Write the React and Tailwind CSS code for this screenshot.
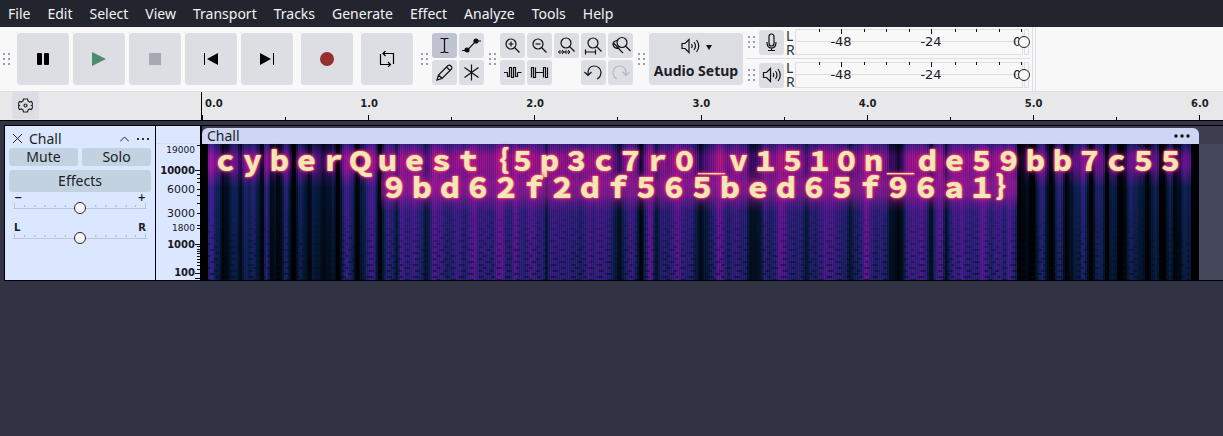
import React from "react";

const MENUS = ["File", "Edit", "Select", "View", "Transport", "Tracks", "Generate", "Effect", "Analyze", "Tools", "Help"];

function Grip() {
  return (
    <svg width="8" height="13" className="shrink-0 fill-[#9a9cb4]" aria-hidden="true">
      {[0, 5, 10].map((y) => (
        <g key={y}>
          <rect x="0" y={y} width="2" height="2" />
          <rect x="5" y={y} width="2" height="2" />
        </g>
      ))}
    </svg>
  );
}

function BigButton({ label, children }) {
  return (
    <button aria-label={label} className="flex size-[52px] shrink-0 items-center justify-center rounded-[3px] bg-[#dddee4]">
      <svg width="16" height="16" viewBox="0 0 16 16" fill="none">{children}</svg>
    </button>
  );
}

function ToolButton({ label, active, children }) {
  return (
    <button
      aria-label={label}
      className={"flex size-[25px] shrink-0 items-center justify-center rounded-[3px] " + (active ? "bg-[#c0c3d2]" : "bg-[#dddee4]")}
    >
      <svg width="21" height="21" viewBox="0 0 21 21" fill="none" stroke="#111" strokeWidth="1.2">{children}</svg>
    </button>
  );
}

function Lens({ x = 9, y = 8, r = 5, handle = 5 }) {
  return (
    <>
      <circle cx={x} cy={y} r={r} />
      <path d={`M${x + r * 0.7} ${y + r * 0.7}l${handle} ${handle}`} />
    </>
  );
}

function Speaker() {
  return (
    <>
      <path d="M2.5 7.5h3l4-4v13l-4-4h-3z" />
      <path d="M12 8q1.5 2 0 4M14.5 6q3 4 0 8M17 4q4.5 6 0 12" />
    </>
  );
}

function Meter({ label, children }) {
  const ticks = [24, 46, 69, 91, 114, 136, 160, 181, 204, 226];
  return (
    <div className="flex h-8 items-center pl-0.5">
      <Grip />
      <div className="ml-[3px] flex items-center gap-0.5">
        <ToolButton label={label}>{children}</ToolButton>
        <div className="w-2 leading-[14px] text-[#333]">
          <div>L</div>
          <div>R</div>
        </div>
        <div className="relative -ml-px h-[27px] w-[235px]">
          <svg width="235" height="27" className="block" fill="none">
            <path d="M0.5 0.5h227v25h-227zM0 12.5h227M229.5 0.5h4v25h-4z" stroke="#dddde3" />
            {ticks.map((x) => (
              <path key={x} d={`M${x + 0.5} 0v${x === 46 || x === 136 ? 5 : 3}`} stroke="#111" />
            ))}
            <g fill="#18181c" fontSize="13" fontFamily="DejaVu Sans, sans-serif">
              <text x="46" y="17" textAnchor="middle">-48</text>
              <text x="136" y="17" textAnchor="middle">-24</text>
              <text x="218" y="17">0</text>
            </g>
          </svg>
          <input
            type="range"
            aria-label={label + " volume"}
            defaultValue="100"
            className="absolute inset-x-0 top-[7px] m-0 h-3 w-full appearance-none bg-transparent [&::-webkit-slider-thumb]:size-3 [&::-webkit-slider-thumb]:appearance-none [&::-webkit-slider-thumb]:rounded-full [&::-webkit-slider-thumb]:border [&::-webkit-slider-thumb]:border-[#222] [&::-webkit-slider-thumb]:bg-[#f8f8f9]"
          />
        </div>
      </div>
    </div>
  );
}

function TrackSlider({ label, low, high }) {
  return (
    <div className="px-1 pt-px">
      <div className="flex justify-between px-px text-[10px] leading-[9px] font-bold">
        <span>{low}</span>
        <span>{high}</span>
      </div>
      <div className="relative h-5">
        <svg width="100%" height="8" viewBox="0 0 132 8" preserveAspectRatio="none" className="absolute top-0 left-0" fill="none">
          <path d="M1.500 1v6M130.500 1v6M0 6.500h132" stroke="#b9c7d8" />
          {[11, 21, 31, 41, 51, 81, 91, 101, 111, 120].map((x) => (
            <path key={x} d={`M${x + 0.5} 3v2`} stroke="#a7b2c2" />
          ))}
        </svg>
        <input
          type="range"
          aria-label={label}
          className="absolute top-0 left-0 m-0 h-3 w-full appearance-none bg-transparent [&::-webkit-slider-thumb]:size-3 [&::-webkit-slider-thumb]:appearance-none [&::-webkit-slider-thumb]:rounded-full [&::-webkit-slider-thumb]:border [&::-webkit-slider-thumb]:border-[#222] [&::-webkit-slider-thumb]:bg-[#fafafa]"
        />
      </div>
    </div>
  );
}

const FREQUENCIES = [
  ["19000", 27, 9, "normal"],
  ["10000", 48, 10, "bold"],
  ["6000", 67, 11, "normal"],
  ["3000", 91, 11, "normal"],
  ["1800", 105, 9, "normal"],
  ["1000", 122, 10, "bold"],
  ["100", 150, 10, "bold"],
];
const FREQUENCY_TICKS = [23, 48, 52, 56, 60, 67, 73, 81, 91, 103, 106, 122, 124, 127, 129, 131, 134, 137, 140, 143, 147, 151];

const DARK = [[223, 5], [239, 3], [261, 4], [270, 3], [279, 4], [293, 4], [308, 5], [325, 6], [338, 4], [356, 4], [380, 4], [396, 3], [427, 4], [546, 3], [618, 5], [641, 5], [656, 3], [701, 8], [751, 4], [759, 4], [806, 3], [850, 4], [892, 5], [899, 5], [931, 4], [946, 3], [1021, 7], [1032, 5], [1051, 5], [1067, 6], [1090, 4], [1107, 4], [1122, 8], [1147, 6], [1162, 5], [1175, 5], [1196, 8]];
const BRIGHT = [[210, 3], [267, 4], [345, 4], [372, 4], [402, 4], [433, 6], [472, 5], [498, 6], [514, 4], [533, 5], [552, 4], [597, 4], [650, 5], [680, 6], [720, 5], [782, 5], [830, 5], [866, 4], [920, 6], [942, 5], [962, 4], [984, 4], [1010, 4], [1060, 3]];

const peak = (list, x) => list.reduce((sum, [c, w]) => sum + Math.exp(-(((x - c) / w) ** 2)), 0);

const COLUMNS = Array.from({ length: 499 }, (_, i) => {
  const x = 202 + i * 2;
  if (x < 208 || x > 1190) return 0;
  const base = x > 380 && x < 1018 ? 10.4 : 7.6;
  const wave = Math.sin(x * 0.43) + Math.sin(x * 0.29 + 1) + Math.sin(x * 0.93) * 0.7;
  const level = base + wave + peak(BRIGHT, x) * 4 - peak(DARK, x) * 7.5;
  return Math.max(0, Math.min(18, Math.round(level)));
});

// top, upper band, middle, bottom for each level of energy
const STOPS = [
  [[0, 0, 0], [2, 1, 8], [0, 2, 5], [0, 0, 0]],
  [[3, 8, 28], [40, 12, 84], [2, 13, 32], [1, 8, 18]],
  [[10, 20, 64], [76, 18, 124], [6, 26, 60], [4, 22, 44]],
  [[25, 29, 96], [100, 20, 140], [17, 32, 88], [10, 28, 68]],
  [[40, 31, 120], [122, 20, 150], [36, 34, 118], [22, 34, 94]],
  [[54, 31, 134], [142, 22, 152], [52, 33, 134], [38, 34, 120]],
  [[68, 29, 144], [160, 22, 150], [70, 29, 144], [54, 32, 134]],
  [[88, 26, 150], [176, 24, 148], [92, 26, 152], [76, 29, 148]],
  [[108, 23, 156], [192, 26, 144], [116, 23, 156], [102, 24, 154]],
  [[132, 21, 156], [208, 32, 138], [144, 22, 156], [132, 22, 158]],
];
const LEVELS = Array.from({ length: 19 }, (_, i) => {
  const low = STOPS[Math.floor(i / 2)];
  const high = STOPS[Math.ceil(i / 2)];
  return low.map((c, k) => `rgb(${c.map((v, n) => Math.round((v + high[k][n]) / 2)).join(",")})`);
});

function Spectrogram() {
  return (
    <svg viewBox="0 0 998 136" preserveAspectRatio="none" className="block h-[136px] w-full" aria-hidden="true">
      <defs>
        {LEVELS.map((c, i) => (
          <linearGradient key={i} id={`level${i}`} x1="0" y1="0" x2="0" y2="1">
            <stop offset="0" stopColor={c[0]} />
            <stop offset="0.09" stopColor={c[1]} />
            <stop offset="0.17" stopColor={c[1]} />
            <stop offset="0.32" stopColor={c[2]} />
            <stop offset="1" stopColor={c[3]} />
          </linearGradient>
        ))}
        <linearGradient id="band" x1="0" y1="0" x2="0" y2="1">
          <stop offset="0" stopColor="#b3169a" stopOpacity="0" />
          <stop offset="0.35" stopColor="#b8189a" stopOpacity="0.55" />
          <stop offset="0.6" stopColor="#b8189a" stopOpacity="0.5" />
          <stop offset="1" stopColor="#8a169a" stopOpacity="0" />
        </linearGradient>
        <pattern id="ripple" width="46" height="12" patternUnits="userSpaceOnUse">
          <path d="M1 1h5M14 1h3M27 1h6M5 4h4M19 4h5M38 4h4M1 7h4M12 7h4M29 7h5M8 10h5M20 10h3M36 10h6" stroke="#020d20" strokeWidth="1.300" />
        </pattern>
        <linearGradient id="fade" x1="0" y1="0" x2="0" y2="1">
          <stop offset="0.45" stopColor="#000" />
          <stop offset="1" stopColor="#fff" />
        </linearGradient>
        <mask id="lower">
          <rect width="998" height="136" fill="url(#fade)" />
        </mask>
      </defs>
      <rect width="998" height="136" fill="#000" />
      {COLUMNS.map((level, i) => (
        <rect key={i} x={i * 2} width="2" height="136" fill={`url(#level${level})`} />
      ))}
      <rect x="179" y="24" width="637" height="44" fill="url(#band)" />
      <rect x="6" width="982" height="136" fill="url(#ripple)" mask="url(#lower)" opacity="0.75" />
    </svg>
  );
}

export default function App() {
  return (
    <div className="flex min-h-screen flex-col bg-[#323446] font-['Noto_Sans',sans-serif] text-sm text-[#1c1d24]">
      <nav className="flex h-[27px] items-center gap-[17px] bg-[#23252e] px-2 text-[#f2f2f4]">
        {MENUS.map((m) => (
          <button key={m}>{m}</button>
        ))}
      </nav>

      <header className="flex h-[65px] items-center border-b border-[#dddde3] bg-[#f8f8f9] pl-[3px]">
        <div className="flex items-center gap-1.5">
          <Grip />
          <div className="flex gap-2">
            <div className="flex gap-1">
              <BigButton label="Pause"><rect x="2" y="2" width="5" height="12" rx="1" fill="#000" /><rect x="9" y="2" width="5" height="12" rx="1" fill="#000" /></BigButton>
              <BigButton label="Play"><path d="M1 1l14 7-14 7z" fill="#4d8c6b" /></BigButton>
              <BigButton label="Stop"><rect x="2" y="2" width="12" height="12" fill="#a5a9b4" /></BigButton>
              <BigButton label="Skip to start"><path d="M1.500 2v12" stroke="#000" /><path d="M15 2v12L4 8z" fill="#000" /></BigButton>
              <BigButton label="Skip to end"><path d="M14.500 2v12" stroke="#000" /><path d="M1 2v12l11-6z" fill="#000" /></BigButton>
            </div>
            <BigButton label="Record"><circle cx="8" cy="8" r="7" fill="#953030" /></BigButton>
            <BigButton label="Loop"><path d="M1.500 3v10.500h10M4 2.500h10.500v10.500M6.500 0L4 2.500l2.500 2.500M9 11l2.500 2.500L9 16" stroke="#000" strokeWidth="1.200" /></BigButton>
          </div>
        </div>

        <div className="ml-2 flex items-center gap-[3px]">
          <Grip />
          <div className="grid grid-cols-2 gap-0.5">
            <ToolButton label="Selection tool" active><path d="M6.500 3.500h3l1 1 1-1h3M6.500 17.500h3l1-1 1 1h3M10.500 4.500v12" /></ToolButton>
            <ToolButton label="Envelope tool"><path d="M1 15.500h5L15 6h5" /><circle cx="6" cy="15" r="2" fill="#000" /><circle cx="15" cy="6" r="2" fill="#000" /></ToolButton>
            <ToolButton label="Draw tool"><path d="M3 18l1.500-5L14 3.500q1.500-1 3 .5t.5 3L8 16.500zM12.500 5l3.500 3.500M4.500 13L8 16.500" /></ToolButton>
            <ToolButton label="Multi-tool"><path d="M10.500 2.500v16M3.500 5.500l14 10M17.500 5.500l-14 10" /></ToolButton>
          </div>
        </div>

        <div className="ml-[5px] flex items-center gap-[3px]">
          <Grip />
          <div className="grid grid-cols-5 gap-0.5">
            <ToolButton label="Zoom in"><Lens x={9} y={9} /><path d="M6.500 9h5M9 6.500v5" /></ToolButton>
            <ToolButton label="Zoom out"><Lens x={9} y={9} /><path d="M6.500 9h5" /></ToolButton>
            <ToolButton label="Fit selection to width"><Lens x={10} y={8} /><path d="M2.500 17h5M8.500 17h5M4.500 15l-2 2 2 2M6 15l2 2-2 2M10.500 15l-2 2 2 2M12 15l2 2-2 2" strokeWidth="1" /></ToolButton>
            <ToolButton label="Fit project to width"><Lens x={10} y={8} /><path d="M2.500 17h10M2.500 14.500v5M12.500 14.500v5" /></ToolButton>
            <ToolButton label="Zoom toggle"><Lens x={12} y={7.5} /><path d="M8 5Q2.500 6.500 3 9.500q1 4 5.500 4L13 18M3.500 8l6 6" /></ToolButton>
            <ToolButton label="Trim audio outside selection"><path d="M2 10.500h3.500M15.500 10.500h4M5.500 10.500v4h2v-9h2v10h2v-10h2v9h2v-4" /></ToolButton>
            <ToolButton label="Silence audio selection"><path d="M2.500 15.500v-10h2v10h2v-10M6.500 10.500h8M14.500 15.500v-10h2v10h2v-10" /></ToolButton>
            <span />
            <ToolButton label="Undo"><path d="M5 13q-.5-9 6-9 6 0 7 6 0 5-4 7M1.500 10L5 13.500 8.500 10" /></ToolButton>
            <ToolButton label="Redo"><path d="M16 13q.5-9-6-9-6 0-7 6 0 5 4 7M19.500 10L16 13.500 12.500 10" stroke="#b3b6c0" /></ToolButton>
          </div>
        </div>

        <div className="ml-[5px] flex items-center gap-[3px]">
          <Grip />
          <button className="flex h-[52px] w-[94px] flex-col items-center justify-between rounded-[3px] bg-[#dddee4] pt-[3px] pb-1 font-bold whitespace-nowrap">
            <span className="flex items-center gap-1">
              <svg width="22" height="21" viewBox="0 0 21 21" fill="none" stroke="#111" strokeWidth="1.200"><Speaker /></svg>
              <svg width="8" height="6"><path d="M1 1h6L4 6z" fill="#111" /></svg>
            </span>
            <span className="leading-5">Audio Setup</span>
          </button>
        </div>

        <div className="ml-[3px] flex h-full border-r border-[#dddde3] pr-0.5">
          <div className="divide-y divide-[#dddde3] border-r border-[#dddde3] pr-0.5">
            <Meter label="Recording level"><path d="M8 5q0-3 2.500-3T13 5v6q0 3-2.500 3T8 11zM6 10q0 6 4.500 6t4.500-6M10.500 16v2.500M7 18.500h7" /></Meter>
            <Meter label="Playback level"><Speaker /></Meter>
          </div>
        </div>
      </header>

      <div className="flex h-[29px] border-b border-black bg-[#e8e8ea] pr-6">
        <div className="w-[201px] shrink-0 pl-3">
          <button aria-label="Timeline options" className="flex h-[27px] w-[27px] items-center justify-center rounded-[3px] bg-[#dddee4]">
            <svg width="15" height="15" viewBox="0 0 15 15" fill="none" stroke="#222" strokeWidth="1.200">
              <path d="M5.500 1h4l.5 2 1.500 1 2-.5 1.500 3-1.500 1 1.500 1-1.500 3-2-.5-1.500 1-.5 2h-4L5 12l-1.500-1-2 .5L0 8.500l1.500-1L0 6.500l1.500-3 2 .5L5 3z" />
              <circle cx="7.500" cy="7.500" r="1.500" />
            </svg>
          </button>
        </div>
        <div className="flex flex-1 font-['DejaVu_Sans',sans-serif] text-[10px] leading-3 font-bold">
          {["0.0", "1.0", "2.0", "3.0", "4.0", "5.0", "6.0"].map((n, i) => (
            <div key={n} className={i === 6 ? "flex w-0 flex-col justify-between" : "flex flex-1 basis-0 flex-col justify-between" + (i === 0 ? " border-l border-black" : "")}>
              <span className={i === 0 ? "pt-1.5 pl-[3px]" : "-ml-2 pt-1.5 whitespace-nowrap"}>{n}</span>
              <div className="grid grid-cols-2 items-end">
                <i className="h-[5px] w-px bg-black" />
                {i < 6 && <i className="h-[3px] w-px bg-black" />}
              </div>
            </div>
          ))}
        </div>
      </div>

      <main className="mt-1 ml-1 flex border-y border-l border-black bg-[#45475a]">
        <section className="w-[151px] shrink-0 border-r border-black bg-[#dbe6ff] px-1 pt-[3px]">
          <div className="flex h-[19px] items-center pr-px pl-1">
            <button aria-label="Close track"><svg width="9" height="9" stroke="#222" fill="none"><path d="M0 0l9 9M9 0L0 9" /></svg></button>
            <span className="ml-[7px] flex-1">Chall</span>
            <button aria-label="Collapse track"><svg width="9" height="6" stroke="#222" fill="none"><path d="M0 5.500L4.500 1 9 5.500" /></svg></button>
            <button aria-label="Track menu" className="ml-2"><svg width="13" height="2" fill="#333"><path d="M0 0h2v2H0zM5 0h2v2H5zM10 0h2v2h-2z" /></svg></button>
          </div>
          <div className="grid grid-cols-2 gap-1">
            <button className="h-[18px] rounded-[3px] bg-[#c2d2e0] leading-[18px]">Mute</button>
            <button className="h-[18px] rounded-[3px] bg-[#c2d2e0] leading-[18px]">Solo</button>
            <button className="col-span-2 h-[22px] rounded-[3px] bg-[#c2d2e0] leading-[20px]">Effects</button>
          </div>
          <div className="font-['DejaVu_Sans',sans-serif]">
            <TrackSlider label="Gain" low="−" high="+" />
            <TrackSlider label="Pan" low="L" high="R" />
          </div>
        </section>

        <svg width="45" height="154" className="shrink-0 bg-[#dbe6ff]" fontFamily="DejaVu Sans, sans-serif" fill="#16171d">
          <path d="M0 17.500h44" stroke="#d4dcef" />
          {FREQUENCIES.map(([t, y, size, weight]) => (
            <text key={t} x="39" y={y} fontSize={size} fontWeight={weight} textAnchor="end">{t}</text>
          ))}
          {FREQUENCY_TICKS.map((y) => (
            <path key={y} d={`M${y === 48 || y === 122 || y === 151 ? 39 : 41} ${y - 3.5}H45`} stroke="#111" />
          ))}
          <path d="M44.500 0v154M39 152.500h6" stroke="#000" />
        </svg>

        <section className="flex flex-1 bg-[linear-gradient(#3c3d4f_18px,#45475a_18px)] pr-6">
          <div className="flex-1 border-l border-black pt-0.5">
            <div className="flex h-4 items-center justify-between rounded-t-md bg-[#cfd6f3] pr-[9px] pl-[5px]">
              <span className="leading-4">Chall</span>
              <button aria-label="Clip menu"><svg width="16" height="4" fill="#111"><circle cx="2" cy="2" r="1.700" /><circle cx="8" cy="2" r="1.700" /><circle cx="14" cy="2" r="1.700" /></svg></button>
            </div>
            <div className="relative">
              <Spectrogram />
              <div className="absolute inset-x-0 top-0 pt-[3px] font-['Noto_Sans_CJK_JP',sans-serif] leading-[26px] font-black whitespace-nowrap text-[#f3e6b8] [font-feature-settings:'fwid'] [text-shadow:0_0_1px_#ff8a4a,0_0_2px_#ff5a55,0_0_3px_#f0307a,0_0_6px_#c01c90]">
                <p className="pl-[10px] text-[27px]">cyberQuest&#123;5p3c7r0_v1510n_de59bb7c55</p>
                <p className="pl-[178px] text-[28px]">9bd62f2df565bed65f96a1&#125;</p>
              </div>
            </div>
          </div>
        </section>
      </main>
    </div>
  );
}
